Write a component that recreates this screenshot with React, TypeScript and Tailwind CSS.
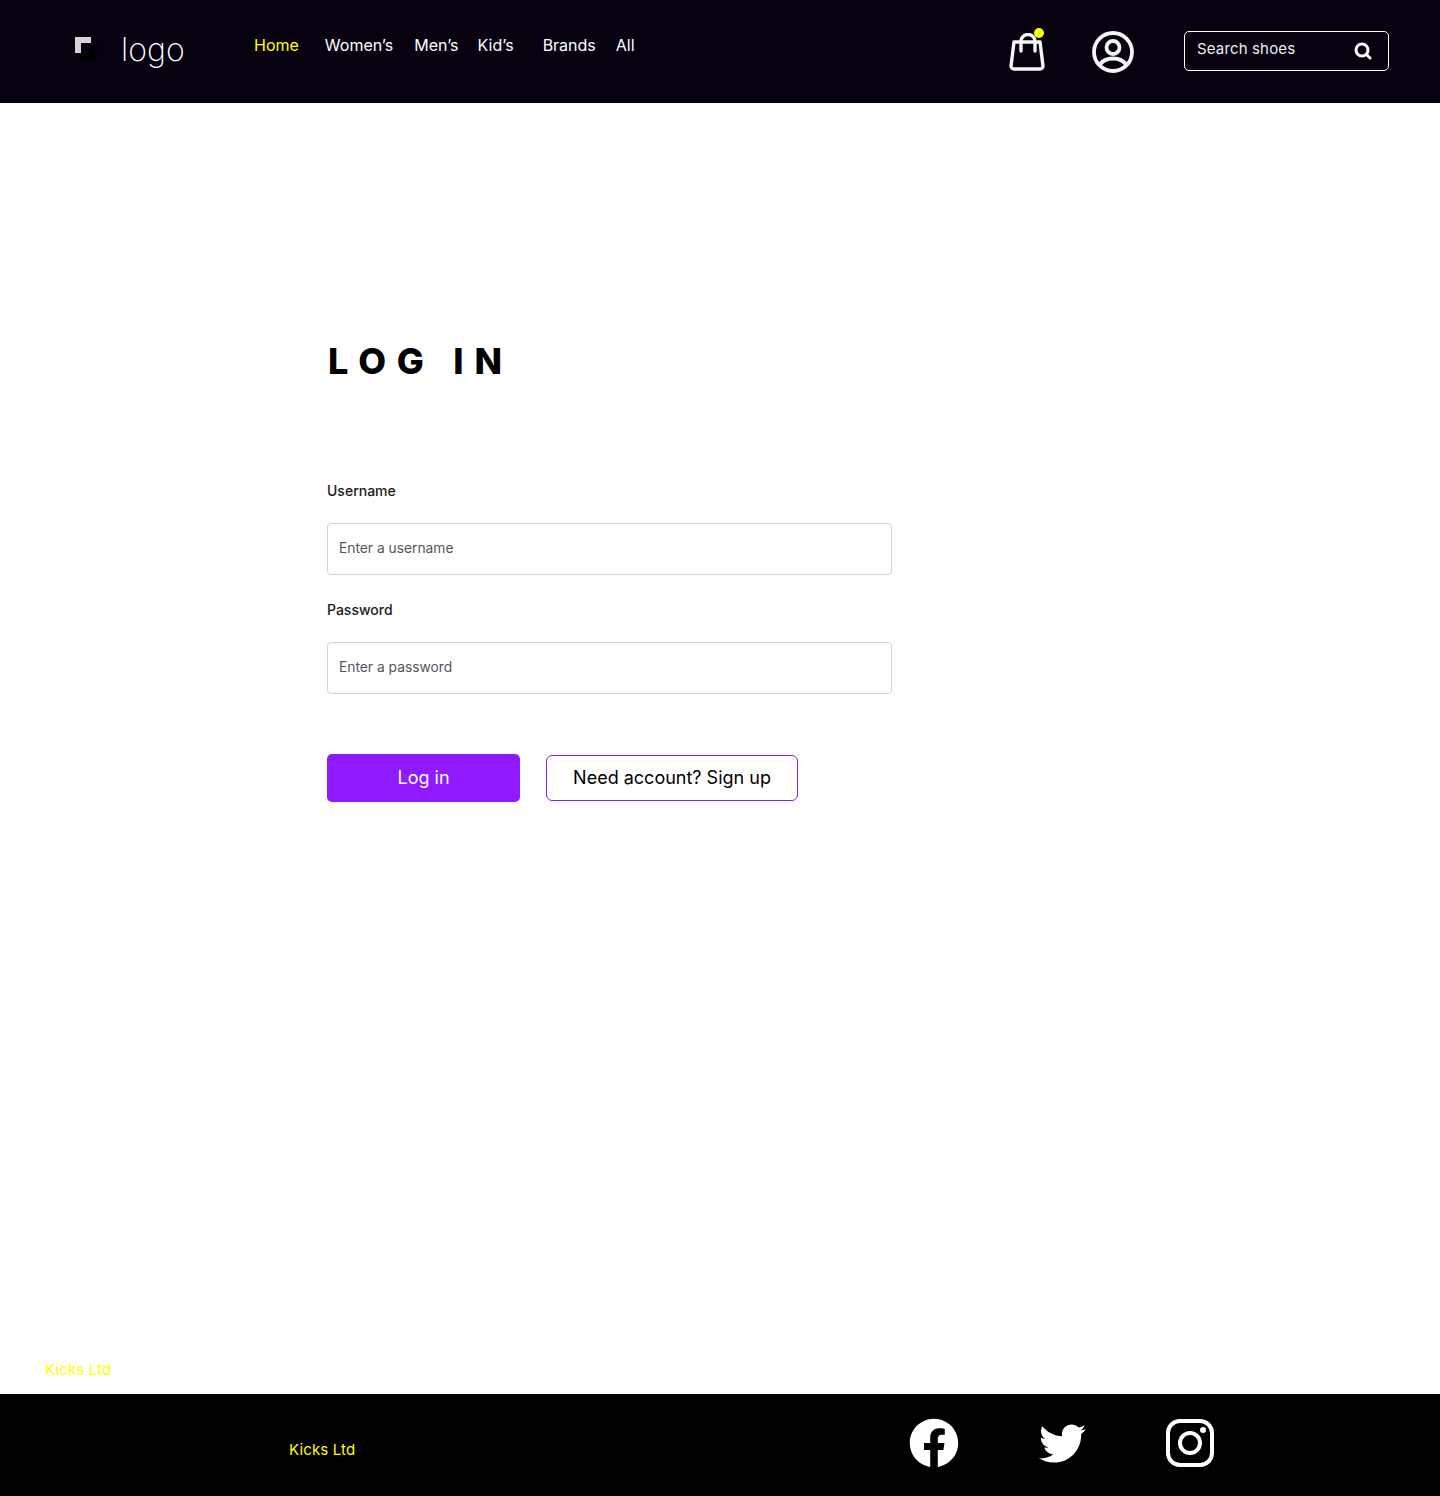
import { FaFacebook, FaTwitter } from 'react-icons/fa';

const navLinks = [
  { label: 'Home', className: 'ml-0 text-[#ffff00]' },
  { label: 'Women’s', className: 'ml-[26px] text-white' },
  { label: 'Men’s', className: 'ml-[21px] text-white' },
  { label: 'Kid’s', className: 'ml-[19px] text-white' },
  { label: 'Brands', className: 'ml-[29px] text-white' },
  { label: 'All', className: 'ml-5 text-white' },
];

function BagIcon() {
  return (
    <svg width="36" height="38" viewBox="0 0 36 38" fill="none" stroke="#f5f5f5" strokeLinecap="round" strokeLinejoin="round" strokeWidth="3.4">
      <path d="M5 9h26l3 24a3 3 0 0 1-3 3H5a3 3 0 0 1-3-3Z" />
      <path d="M12 18V8a7 6.500 0 0 1 14 0v10" />
    </svg>
  );
}

function UserIcon() {
  return (
    <svg width="42" height="42" viewBox="0 0 42 42" fill="none" stroke="#f5f5f5" strokeWidth="3.8">
      <circle cx="21" cy="21" r="19" />
      <circle cx="21" cy="16.500" r="6.500" />
      <path d="M7.500 34c3-4.500 8-6.500 13.500-6.500s10.500 2 13.500 6.500" />
    </svg>
  );
}

function SearchIcon() {
  return (
    <svg width="18" height="18" viewBox="0 0 18 18" fill="none" stroke="white" strokeLinecap="round" strokeWidth="3">
      <circle cx="8" cy="8" r="6" />
      <path d="M12.500 12.500 16 16" />
    </svg>
  );
}

function InstagramIcon() {
  return (
    <svg width="48" height="48" viewBox="0 0 48 48" fill="none" stroke="white" strokeWidth="4">
      <rect x="2" y="2" width="44" height="44" rx="12" />
      <circle cx="24" cy="24" r="10" />
      <circle cx="37" cy="11" r="3" fill="white" stroke="none" />
    </svg>
  );
}

export default function App() {
  return (
    <div className="flex min-h-[1496px] flex-col bg-white font-['Inter',sans-serif]">
      <header className="flex h-[103px] items-center bg-[#07000f] pl-[75px] pr-[51px]">
        <div className="flex w-[179px] items-center">
          <div className="relative -mt-[14px] h-[16px] w-[16px] bg-[#d4d4d4] shadow-[6px_6px_0_#000]">
            <div className="absolute bottom-0 right-0 h-[10px] w-[10px] bg-[#07000f]" />
          </div>
          <span className="-mt-[3px] ml-[30px] text-[32px] font-extralight leading-none text-white">logo</span>
        </div>
        <nav className="-mt-[13px] flex flex-1 text-base">
          {navLinks.map(link => (
            <a key={link.label} className={link.className}>{link.label}</a>
          ))}
        </nav>
        <div className="relative mr-[47px]">
          <BagIcon />
          <span className="absolute right-[1px] top-[-5px] h-[10px] w-[10px] rounded-full bg-[#ffff00]" />
        </div>
        <div className="mr-[50px]">
          <UserIcon />
        </div>
        <div className="-mt-px flex h-10 w-[205px] items-center justify-between rounded-[5px] border border-white pl-3 pr-[16px] text-[15px] tracking-[0.01em] text-[#eeeeee]">
          <span className="-mt-[3px]">Search shoes</span>
          <SearchIcon />
        </div>
      </header>

      <main className="flex-1 pl-[327px]">
        <h1 className="ml-px mt-[238px] text-[36px] font-extrabold leading-[40px] tracking-[0.3em] text-black">LOG IN</h1>
        <form className="mt-[100px] w-[565px]">
          <label className="block text-sm font-medium leading-5 text-[#1a1a1a]">Username</label>
          <input
            placeholder="Enter a username"
            className="mt-[22px] block h-[52px] w-full rounded-[4px] border border-[#d0d0d8] px-[11px] pb-[3px] text-[13.8px] placeholder:text-[#555560]"
          />
          <label className="mt-[25px] block text-sm font-medium leading-5 text-[#1a1a1a]">Password</label>
          <input
            placeholder="Enter a password"
            className="mt-[22px] block h-[52px] w-full rounded-[4px] border border-[#d0d0d8] px-[11px] pb-[3px] text-[13.8px] placeholder:text-[#555560]"
          />
          <div className="mt-[60px] flex items-center">
            <button type="button" className="h-12 w-[193px] rounded-[5px] bg-[#8f1aff] text-lg text-white">Log in</button>
            <button type="button" className="ml-[26px] h-[46px] w-[252px] rounded-[6px] border border-[#8f1aff] text-lg text-black">Need account? Sign up</button>
          </div>
        </form>
      </main>

      <p className="pb-[14px] pl-[45px] text-[15px] leading-5 tracking-[0.01em] text-[#ffff00]">Kicks Ltd</p>
      <footer className="flex h-[102px] items-start bg-black pl-[289px]">
        <p className="mt-[46px] w-[66px] whitespace-nowrap text-[15px] leading-5 tracking-[0.01em] text-[#ffff00]">Kicks Ltd</p>
        <div className="ml-[555px] mt-[25px] flex gap-20 text-white">
          <div className="flex h-12 w-12 items-center justify-center">
            <FaFacebook className="shrink-0" size={50} />
          </div>
          <div className="flex h-12 w-12 items-center justify-center pl-px">
            <FaTwitter className="shrink-0" size={47} />
          </div>
          <InstagramIcon />
        </div>
      </footer>
    </div>
  );
}
